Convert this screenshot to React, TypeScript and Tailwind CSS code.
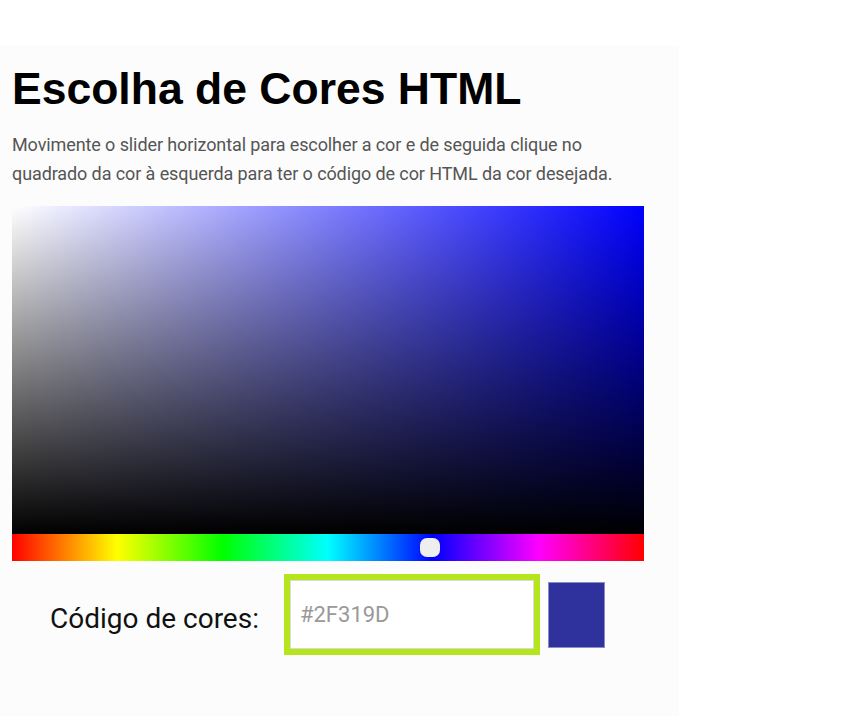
export default function App() {
  const hex = "#2F319D";

  return (
    <div className="h-[716px] bg-white pt-[46px]">
      <div className="h-[670px] w-[679px] bg-[#fcfcfc] pl-3 pt-[17px]">
        <h1 className="font-['Liberation_Sans',Arial,sans-serif] text-[44.5px] font-bold leading-[1.15] text-black">
          Escolha de Cores HTML
        </h1>
        <p className="mt-[16px] w-[630px] font-['Roboto',sans-serif] text-[18px] leading-[29px] tracking-[-0.1px] text-[#555]">
          Movimente o slider horizontal para escolher a cor e de seguida clique no
          quadrado da cor à esquerda para ter o código de cor HTML da cor desejada.
        </p>

        {/* saturation / value square */}
        <div className="relative mt-[18px] w-[632px]">
          <div className="h-[328px] w-full bg-[#0000ff]">
            <div className="h-full w-full bg-gradient-to-r from-white to-transparent">
              <div className="h-full w-full bg-gradient-to-b from-transparent to-black" />
            </div>
          </div>
          <div className="relative h-[27px] w-full bg-[linear-gradient(to_right,#ff0000_0%,#ffff00_16.67%,#00ff00_33.33%,#00ffff_50%,#0000ff_66.67%,#ff00ff_83.33%,#ff0000_100%)]">
            <div className="absolute left-[408px] top-[4px] h-[19px] w-[20px] rounded-[7px] bg-[#eeeeee]" />
          </div>
        </div>

        <div className="mt-[13px] flex items-center">
          <span className="ml-[38px] pt-2 font-['Roboto',sans-serif] text-[28px] text-[#111]">
            Código de cores:
          </span>
          <div className="ml-[25px] border-[6px] border-[#b5e61d] bg-white">
            <input
              readOnly
              value={hex}
              className="block h-[69px] w-[244px] border border-[#d9d9d9] bg-white pl-[9px] font-['Roboto',sans-serif] text-[22px] text-[#999] outline-none"
            />
          </div>
          <div
            className="ml-[8px] h-[66px] w-[57px] border border-[#8a8cc8]"
            style={{ backgroundColor: hex }}
          />
        </div>
      </div>
    </div>
  );
}
